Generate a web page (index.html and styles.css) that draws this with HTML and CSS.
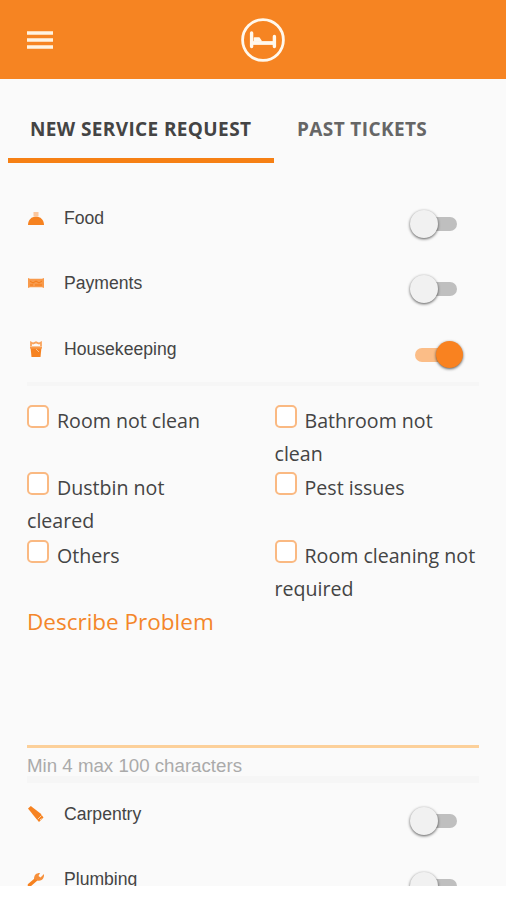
FILE: index.html
```html
<!DOCTYPE html>
<html lang="en">
<head>
<meta charset="utf-8">
<title>New Service Request</title>
<link rel="stylesheet" href="styles.css">
</head>
<body>
<div class="app">
  <header class="topbar">
    <svg class="menu" viewBox="0 0 28 20"><path d="M1 3h26M1 10h26M1 17h26" stroke="#fff3e2" stroke-width="3.4"/></svg>
    <svg class="logo" viewBox="0 0 44 44" fill="none" stroke="#fff8ed"><circle cx="22" cy="22" r="20.4" stroke-width="2.8"/><path d="M10.600 15v13.500M33.400 18.500v10" stroke-width="3.400" stroke-linecap="round"/><path d="M11 25h23" stroke-width="3.800"/><path d="M13.500 20h4.500l2 3h-6.500z" fill="#fff8ed" stroke-width="1.500" stroke-linejoin="round"/></svg>
  </header>
  <nav class="tabs">
    <a class="tab tab-active">NEW SERVICE REQUEST</a>
    <a class="tab">PAST TICKETS</a>
  </nav>
  <main class="content">
    <div class="row">
      <svg class="icon" viewBox="0 0 18 18"><path d="M1 16c0-5 3.500-8.500 8-8.500s8 3.500 8 8.500z" fill="#f68220"/><path d="M6.500 3h5v4.500h-5z" fill="#fcc79d"/></svg>
      <span class="label">Food</span><span class="toggle"></span>
    </div>
    <div class="row">
      <svg class="icon" viewBox="0 0 18 18"><path d="M1 4l2 .7h12l2-.7v10l-2-.7H3L1 14z" fill="#f89a4b"/><path d="M3 7l3 2 3-2 3 2 3-2M3 11h3m2 0h7" stroke="#f47b16" fill="none"/></svg>
      <span class="label">Payments</span><span class="toggle"></span>
    </div>
    <div class="row">
      <svg class="icon" viewBox="0 0 18 18"><path d="M3.500 7h11l-1 10h-9z" fill="#f68220"/><path d="M4 6V2.500l2 1 3-1.200 3 1.200 2-1V6" fill="none" stroke="#f9a45d" stroke-width="1.800"/><path d="M3 7.500h12" stroke="#f89a4b" stroke-width="2.200"/><path d="M9 9l3 3" stroke="#fbc390"/></svg>
      <span class="label">Housekeeping</span><span class="toggle on"></span>
    </div>
    <section class="details">
      <div class="options">
        <label><i class="box"></i>Room not clean</label>
        <label><i class="box"></i>Bathroom not clean</label>
        <label><i class="box"></i>Dustbin not cleared</label>
        <label><i class="box"></i>Pest issues</label>
        <label><i class="box"></i>Others</label>
        <label><i class="box"></i>Room cleaning not required</label>
      </div>
      <div class="describe">Describe Problem</div>
      <div class="hint">Min 4 max 100 characters</div>
    </section>
    <div class="row">
      <svg class="icon" viewBox="0 0 18 18"><path d="M1 3.500L3.800 1 13.500 8.500l3 4-4.500 4.500-3-3.500z" fill="#f68220"/><path d="M10.800 14.200l3.700-3.700M13 15l1.500-1.500" stroke="#fdd0a5" stroke-width="1"/></svg>
      <span class="label">Carpentry</span><span class="toggle"></span>
    </div>
    <div class="row">
      <svg class="icon" viewBox="0 0 18 18"><path d="M2.500 15L9 9.500" stroke="#f68220" stroke-width="3.600" stroke-linecap="round"/><path d="M7 9c0-4 2-6 6-6l-1.500 3 2 1.500L17 4c.5 5-3 7.500-6.500 6.500z" fill="#f68f3a"/></svg>
      <span class="label">Plumbing</span><span class="toggle"></span>
    </div>
  </main>
</div>
</body>
</html>
```
FILE: styles.css
```css
* { box-sizing: border-box; }
body { margin: 0; background: #fff; font-family: "Open Sans", sans-serif; color: #444; overflow: hidden; }
.app { height: 886px; background: #fafafa; overflow: hidden; }
.topbar { height: 79px; background: #f68422; display: grid; grid-template-columns: 215px 44px 1fr; align-items: center; padding: 1px 0 0 26px; }
.menu { width: 28px; height: 20px; }
.logo { width: 44px; height: 44px; }
.tabs { display: flex; height: 83.500px; padding-left: 8px; }
.tab { padding: 35px 0 0 23px; font-size: 19px; letter-spacing: 0.38px; line-height: 30px; font-weight: 700; color: #666; white-space: nowrap; }
.tab-active { width: 266px; padding-left: 22px; color: #444; border-bottom: 5px solid #f68014; }
.content { padding: 23.500px 27px 0; }
.row { display: flex; height: 65.3px; }
.icon { width: 18px; height: 18px; margin-top: 23px; }
.label { flex: 1; padding: 20px 0 0 19px; line-height: 24px; font-family: "Liberation Sans", sans-serif; font-size: 17.600px; color: #444; }
.details ~ .row .label { padding-top: 19px; }
.details ~ .row .icon { margin-top: 22px; }
.toggle { position: relative; width: 42px; height: 14px; margin: 31px 22px 0 0; border-radius: 7px; background: #bfbfbf; }
.toggle::after { content: ""; position: absolute; left: -5px; top: -7px; width: 28px; height: 28px; border-radius: 50%; background: #f1f1f1; box-shadow: 0 1px 3px rgba(0,0,0,.65); }
.toggle.on { background: #fbbd87; }
.toggle.on::after { left: 21px; width: 27px; height: 27px; background: #f98220; }
.details { border-top: 4px solid #f6f6f6; border-bottom: 7px solid #f6f6f6; height: 401px; }
.options { display: grid; grid-template-columns: 247.5px 1fr; grid-auto-rows: 67.5px; padding-top: 18px; font-size: 19.600px; line-height: 33px; }
.options label:nth-child(odd) { padding-right: 60px; }
.box { display: inline-block; width: 22px; height: 23px; border: 2px solid #fab982; border-radius: 5px; background: #fff; vertical-align: 0; margin-right: 8px; }
.describe { height: 142px; padding-top: 1px; border-bottom: 3px solid #fcd09a; color: #f4862a; font-size: 22.500px; line-height: 30px; }
.hint { font-family: "Liberation Sans", sans-serif; font-size: 18.700px; line-height: 24px; padding-top: 6px; color: #aaa; }
```
